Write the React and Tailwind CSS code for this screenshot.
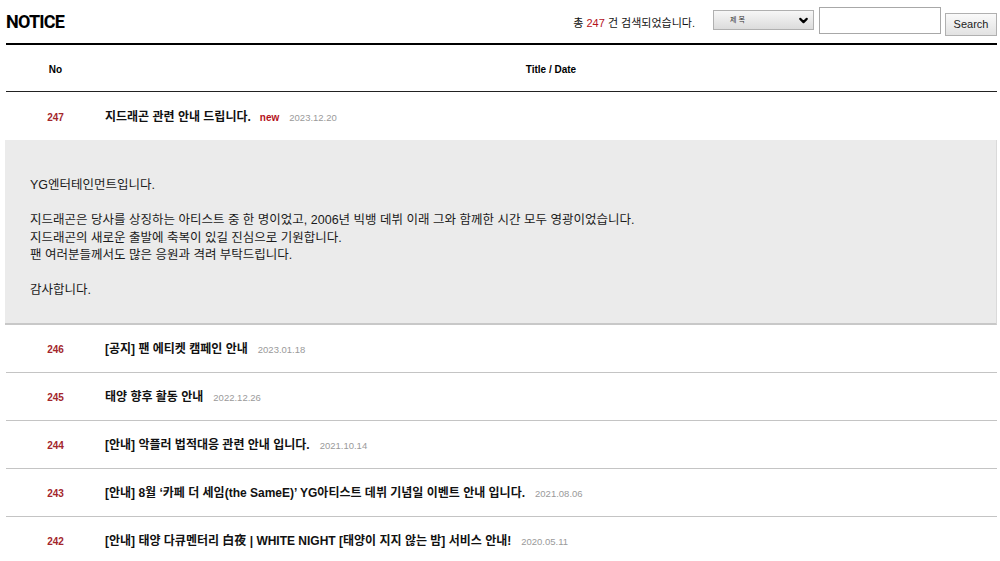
import { ChevronDown } from "lucide-react";

const font = "font-['Liberation_Sans','Noto_Sans_CJK_KR',sans-serif]";

const notices = [
  { no: 246, title: "[공지] 팬 에티켓 캠페인 안내", date: "2023.01.18" },
  { no: 245, title: "태양 향후 활동 안내", date: "2022.12.26" },
  { no: 244, title: "[안내] 악플러 법적대응 관련 안내 입니다.", date: "2021.10.14" },
  { no: 243, title: "[안내] 8월 ‘카페 더 세임(the SameE)’ YG아티스트 데뷔 기념일 이벤트 안내 입니다.", date: "2021.08.06" },
  { no: 242, title: "[안내] 태양 다큐멘터리 白夜 | WHITE NIGHT [태양이 지지 않는 밤] 서비스 안내!", date: "2020.05.11" },
];

function Row({ no, title, date, isNew, last }) {
  return (
    <div className={`flex items-center h-[48px] pt-[2px] ${last ? "" : "border-b border-[#c4c4c4]"}`}>
      <div className="w-[99px] text-center text-[10px] font-bold text-[#a3262c]">{no}</div>
      <div className="flex items-baseline">
        <span className="text-[12px] font-bold text-[#111]">{title}</span>
        {isNew && <span className="ml-[9px] text-[10px] font-bold text-[#b5121b]">new</span>}
        <span className="ml-[10px] text-[9.5px] text-[#9a9a9a]">{date}</span>
      </div>
    </div>
  );
}

export default function App() {
  return (
    <div className={`w-[1000px] h-[561px] overflow-hidden bg-white ${font}`}>
      <div className="ml-[6px] w-[991px]">
        <div className="flex items-center justify-between h-[43px]">
          <h1 className="font-['Roboto',sans-serif] text-[18px] font-bold tracking-[-0.8px] text-black leading-none">
            NOTICE
          </h1>
          <div className="flex items-center">
            <span className="text-[11px] text-[#111] mr-[18px] mt-[3px]">
              총 <span className="text-[#b5121b]">247</span> 건 검색되었습니다.
            </span>
            <div className="flex items-center justify-between w-[101px] h-[20px] mb-[3px] border border-[#b0b0b0] bg-gradient-to-b from-[#f7f7f7] to-[#dcdcdc] pl-[16px] pr-[3px]">
              <span className="text-[7px] text-[#333]">제 목</span>
              <ChevronDown size={13} strokeWidth={4} className="text-black" />
            </div>
            <div className="w-[122px] h-[27px] ml-[5px] mb-[2px] border border-[#a8a8a8] bg-white" />
            <button className="w-[52px] h-[23px] ml-[4px] mt-[5px] border border-[#b0b0b0] bg-gradient-to-b from-[#fafafa] to-[#e2e2e2] text-[11px] text-[#222]">
              Search
            </button>
          </div>
        </div>
        <div className="h-[2px] bg-black" />
        <div className="flex items-center h-[47px] pt-[2px] border-b border-[#222] text-[10px] font-bold text-black">
          <div className="w-[99px] text-center">No</div>
          <div className="flex-1 text-center">Title / Date</div>
        </div>
        <Row no={247} title="지드래곤 관련 안내 드립니다." date="2023.12.20" isNew last />
        <div className="-ml-[1px] bg-[#ebebeb] border-r border-[#dadada] border-b-2 border-b-[#c8c8c8] pl-[25px] pt-[37px] pb-[23px] text-[12.5px] leading-[17.5px] text-[#1a1a1a]">
          <p>YG엔터테인먼트입니다.</p>
          <p>&nbsp;</p>
          <p>지드래곤은 당사를 상징하는 아티스트 중 한 명이었고, 2006년 빅뱅 데뷔 이래 그와 함께한 시간 모두 영광이었습니다.</p>
          <p>지드래곤의 새로운 출발에 축복이 있길 진심으로 기원합니다.</p>
          <p>팬 여러분들께서도 많은 응원과 격려 부탁드립니다.</p>
          <p>&nbsp;</p>
          <p>감사합니다.</p>
        </div>
        {notices.map((n) => (
          <Row key={n.no} {...n} />
        ))}
      </div>
    </div>
  );
}
